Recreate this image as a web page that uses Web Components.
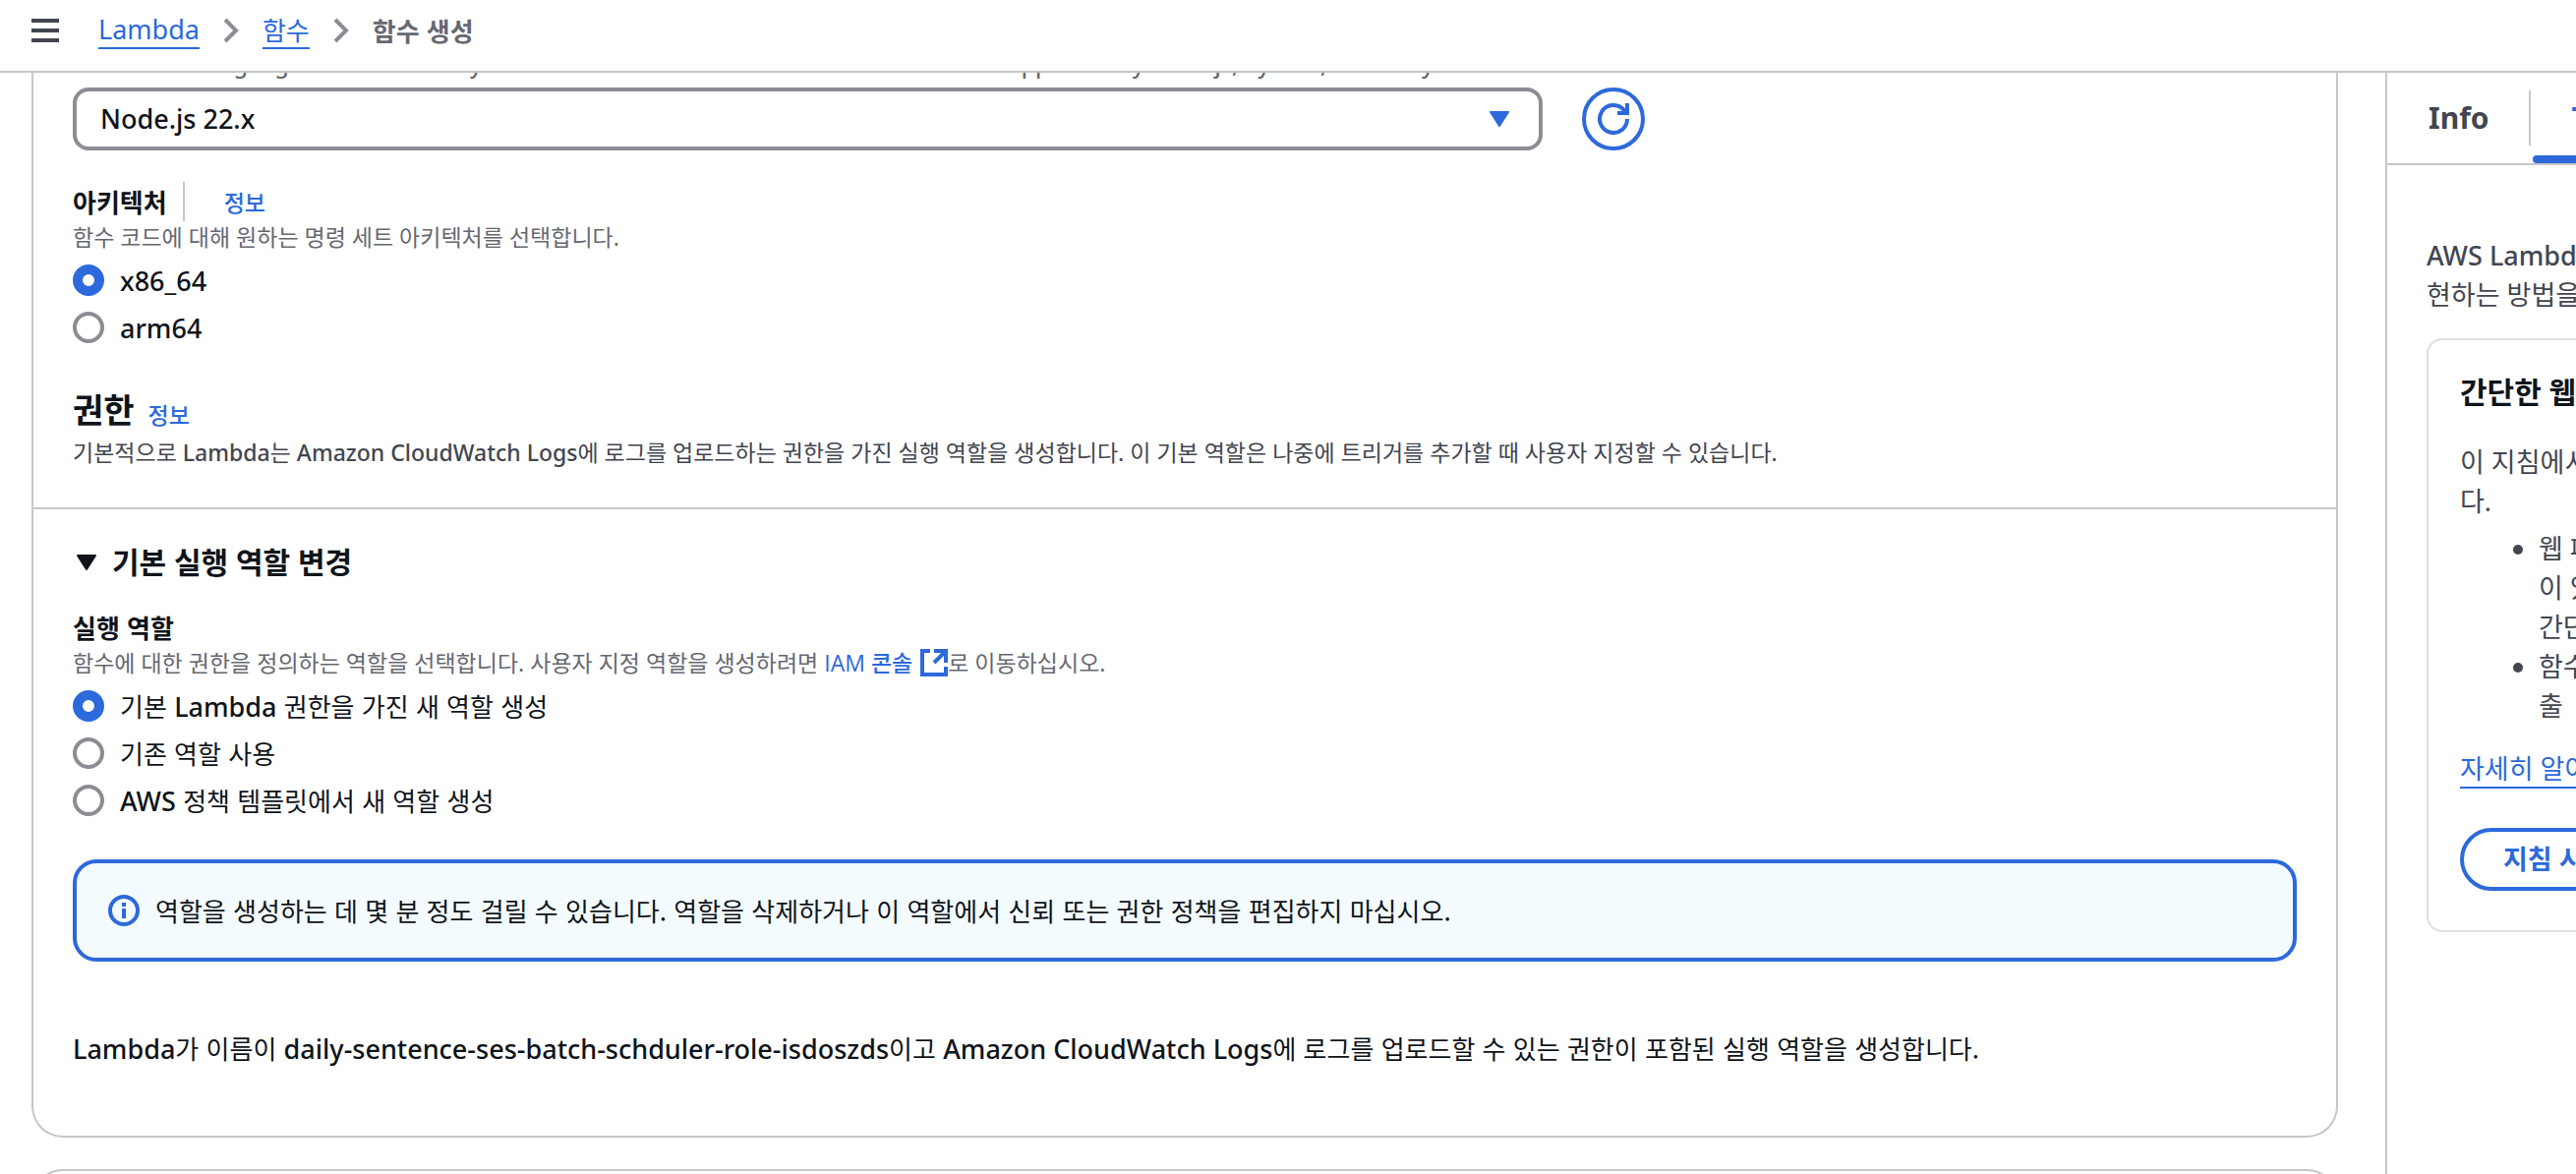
<!DOCTYPE html>
<html lang="ko">
<head>
<meta charset="utf-8">
<title>함수 생성 - Lambda</title>
<style>
  :root {
    --blue: #2c69db;
    --text: #0f141a;
    --body: #424650;
    --muted: #656871;
    --line: #c6c6cd;
    --control: #8c8c94;
    --base: 26px;
    --base-latin: 27px;
    --small: 23px;
    --latin: "Noto Sans", "Noto Sans CJK KR", sans-serif;
  }
  html, body { margin: 0; height: 100%; }
  body {
    overflow: hidden;
    background: #fff;
    color: var(--text);
    font-family: "Noto Sans CJK KR", "Noto Sans", sans-serif;
    font-size: var(--base);
    line-height: 40px;
  }
</style>
</head>
<body>
<console-page></console-page>
<script>
const define = (name, html, setup) => customElements.define(name, class extends HTMLElement {
  connectedCallback() {
    if (this.shadowRoot) return;
    const t = document.createElement('template');
    t.innerHTML = '<style>[lang=en] { font-family: var(--latin); font-size: var(--base-latin); font-weight: 500; }</style>' + html;
    this.attachShadow({ mode: 'open' }).append(t.content.cloneNode(true));
    if (setup) setup(this, this.shadowRoot);
  }
});

define('console-header', `
<style>
  :host { display: flex; align-items: center; box-sizing: border-box; height: 74px; padding: 0 32px 10px; border-bottom: 2px solid var(--line); background: #fff; flex: none; }
  button { all: unset; display: block; width: 28px; height: 24px; cursor: pointer; }
  svg { display: block; }
  nav { margin-left: 40px; }
  ol { display: flex; align-items: center; list-style: none; margin: 0; padding: 0; }
  a { display: block; color: var(--blue); text-decoration: none; line-height: 36px; border-bottom: 2px solid; }
  a[lang=en] { font-weight: 400; }
  li { display: flex; align-items: center; }
  li svg { margin: 0 24px; }
  .here { font-weight: 700; color: var(--muted); line-height: 36px; }
</style>
<button aria-label="메뉴"><svg width="28" height="24" fill="#424650"><path d="M0 0h28v4H0zM0 10h28v4H0zM0 20h28v4H0z"/></svg></button>
<nav>
  <ol>
    <li><a lang="en" href="#lambda">Lambda</a><svg width="16" height="26" fill="none" stroke="#8c8c94" stroke-width="4"><path d="M2 2l11 11L2 24"/></svg></li>
    <li><a href="#functions">함수</a><svg width="16" height="26" fill="none" stroke="#8c8c94" stroke-width="4"><path d="M2 2l11 11L2 24"/></svg></li>
    <li class="here">함수 생성</li>
  </ol>
</nav>`);

define('info-link', `
<style>
  :host { display: inline-block; line-height: 32px; font-family: var(--latin); }
  a { color: var(--blue); font-size: var(--small); font-weight: 500; text-decoration: none; }
</style>
<a href="#info">정보</a>`);

define('runtime-select', `
<style>
  :host { display: flex; gap: 40px; }
  .box { position: relative; flex: 0 1 1495px; }
  select { appearance: none; width: 100%; height: 64px; margin: 0; padding: 0 24px; border: 4px solid var(--control); border-radius: 16px; background: #fff; color: var(--text); font: inherit; font-family: var(--latin); font-size: var(--base-latin); font-weight: 500; display: block; }
  .box svg { position: absolute; right: 34px; top: 24px; pointer-events: none; }
  button { box-sizing: border-box; width: 64px; height: 64px; padding: 0; border: 4px solid var(--blue); border-radius: 50%; background: #fff; display: grid; place-items: center; color: var(--blue); }
</style>
<div class="box">
  <select aria-label="런타임"><option>Node.js 22.x</option></select>
  <svg width="20" height="16" fill="#2c69db" stroke="#2c69db" stroke-width="2" stroke-linejoin="round"><path d="M1 1h18l-9 14z"/></svg>
</div>
<button aria-label="새로 고침"><svg width="32" height="32" fill="none" stroke="currentColor" stroke-width="4"><path d="M30 16A14 14 0 1 1 26 6.200l4 4M30 0v10H20"/></svg></button>`);

define('radio-group', `
<style>
  :host { display: block; }
  fieldset { border: 0; margin: 0; padding: 0; min-width: 0; display: flex; flex-direction: column; gap: 16px; }
  label { display: flex; align-items: center; gap: 16px; height: 32px; line-height: 32px; width: max-content; }
  input { appearance: none; box-sizing: border-box; width: 32px; height: 32px; margin: 0; border: 4px solid var(--control); border-radius: 50%; background: #fff; }
  input:checked { border: 10px solid var(--blue); }
</style>
<fieldset></fieldset>`, (host, root) => {
  const set = root.querySelector('fieldset');
  set.setAttribute('aria-label', host.getAttribute('label'));
  host.getAttribute('options').split('|').forEach((text, i) => {
    const label = document.createElement('label');
    const input = document.createElement('input');
    const caption = document.createElement('span');
    input.type = 'radio';
    input.name = 'choice';
    input.checked = i === 0;
    caption.innerHTML = text.replace(/[A-Za-z]\w*/g, '<span lang="en">$&</span>');
    label.append(input, caption);
    set.append(label);
  });
});

define('info-alert', `
<style>
  :host { display: flex; align-items: center; gap: 16px; box-sizing: border-box; min-height: 104px; padding: 28px 32px; border: 4px solid var(--blue); border-radius: 24px; background: #f3fbfe; }
  svg { flex: none; }
</style>
<svg width="32" height="32" fill="none" stroke="#2c69db"><circle cx="16" cy="16" r="14" stroke-width="4"/><path d="M16 8v4M16 14v10" stroke-width="4"/></svg>
<span><slot></slot></span>`);

define('create-form', `
<style>
  :host { display: flex; flex-direction: column; gap: 32px; flex: 1; min-width: 0; padding: 0 48px 0 32px; overflow: hidden; }
  .card { flex: none; border: 2px solid var(--line); border-top: 0; border-radius: 0 0 32px 32px; }
  .next { height: 64px; border: 2px solid var(--line); border-radius: 32px 32px 0 0; flex: none; }
  section { padding: 0 40px 40px; }
  .hint, .hint [lang=en] { font-size: var(--small); }
  .hint { margin: 0; font-family: var(--latin); line-height: 32px; color: var(--muted); }
  .cut { margin-top: -25px; margin-bottom: 8px; }
  .label { display: flex; align-items: center; height: 40px; margin-top: 32px; font-weight: 700; }
  .label span { padding-right: 16px; border-right: 2px solid var(--line); }
  .label info-link { margin-left: 40px; }
  radio-group { margin-top: 12px; }
  h2 { display: flex; align-items: center; gap: 14px; margin: 43px 0 4px; font-size: 34px; line-height: 48px; }
  h2 info-link { padding-top: 8px; }
  .dark { color: var(--body); }
  .role { border-top: 2px solid var(--line); padding: 36px 40px 68px; }
  h3 { display: flex; align-items: center; gap: 16px; margin: 0; padding-left: 4px; font-family: var(--latin); font-size: 30px; line-height: 36px; }
  h4 { margin: 28px 0 0; font-size: var(--base); line-height: 40px; }
  .hint a { color: var(--blue); text-decoration: none; font-family: "Open Sans", "Noto Sans CJK KR", sans-serif; font-weight: 500; }
  .hint a svg { vertical-align: -5px; margin-left: 8px; }
  info-alert { margin-top: 44px; }
  .result { margin: 68px 0 0; }
</style>
<div class="card">
  <section>
    <p class="hint cut" lang="en">Choose the language to use to write your function. Note that the console code editor supports only Node.js, Python, and Ruby.</p>
    <runtime-select></runtime-select>
    <div class="label"><span>아키텍처</span><info-link></info-link></div>
    <p class="hint">함수 코드에 대해 원하는 명령 세트 아키텍처를 선택합니다.</p>
    <radio-group label="아키텍처" options="x86_64|arm64"></radio-group>
    <h2>권한 <info-link></info-link></h2>
    <p class="hint dark">기본적으로 <span lang="en">Lambda</span>는 <span lang="en">Amazon CloudWatch Logs</span>에 로그를 업로드하는 권한을 가진 실행 역할을 생성합니다. 이 기본 역할은 나중에 트리거를 추가할 때 사용자 지정할 수 있습니다.</p>
  </section>
  <section class="role">
    <h3><svg width="20" height="16" fill="#0f141a" stroke="#0f141a" stroke-width="2" stroke-linejoin="round"><path d="M1 1h18l-9 14z"/></svg>기본 실행 역할 변경</h3>
    <h4>실행 역할</h4>
    <p class="hint">함수에 대한 권한을 정의하는 역할을 선택합니다. 사용자 지정 역할을 생성하려면 <a href="#iam">IAM 콘솔<svg width="28" height="28" fill="none" stroke="#2c69db" stroke-width="4"><path d="M10 2H2v24h24v-8M14 2h12v12M26 2L14 14"/></svg></a>로 이동하십시오.</p>
    <radio-group label="실행 역할" options="기본 Lambda 권한을 가진 새 역할 생성|기존 역할 사용|AWS 정책 템플릿에서 새 역할 생성"></radio-group>
    <info-alert>역할을 생성하는 데 몇 분 정도 걸릴 수 있습니다. 역할을 삭제하거나 이 역할에서 신뢰 또는 권한 정책을 편집하지 마십시오.</info-alert>
    <p class="result"><span lang="en">Lambda</span>가 이름이 <span lang="en">daily-sentence-ses-batch-schduler-role-isdoszds</span>이고 <span lang="en">Amazon CloudWatch Logs</span>에 로그를 업로드할 수 있는 권한이 포함된 실행 역할을 생성합니다.</p>
  </section>
</div>
<div class="next"></div>`);

define('help-panel', `
<style>
  :host { display: block; flex: 0 0 192px; border-left: 2px solid var(--line); overflow: hidden; white-space: nowrap; color: var(--body); font-family: var(--latin); font-size: var(--base-latin); }
  .tabs { display: flex; height: 92px; border-bottom: 2px solid var(--line); font-size: 30px; font-weight: 700; }
  .tabs button { all: unset; box-sizing: border-box; flex: none; height: 92px; line-height: 92px; padding: 0 40px 0 42px; }
  .tabs i { flex: none; width: 2px; height: 56px; margin: 18px 2px 0 0; background: var(--line); }
  .tabs .on { color: var(--blue); position: relative; width: 240px; padding-left: 40px; }
  .tabs .on::after { content: ""; position: absolute; left: 0; right: 0; bottom: 0; height: 8px; border-radius: 4px; background: var(--blue); }
  .body { padding: 72px 0 0 40px; }
  p, ul, h3 { margin: 0; }
  .card { width: 480px; box-sizing: border-box; margin-top: 24px; padding: 32px 32px 40px; border: 2px solid #dedee3; border-radius: 16px; }
  h3 { color: var(--text); font-size: 30px; line-height: 42px; margin-bottom: 30px; }
  ul { padding-left: 80px; margin-top: 8px; }
  a { display: inline-block; margin-top: 26px; line-height: 36px; color: var(--blue); text-decoration: none; border-bottom: 2px solid; }
  .go { display: block; width: 240px; height: 64px; margin-top: 40px; padding: 0 40px; text-align: left; border: 4px solid var(--blue); border-radius: 32px; background: #fff; color: var(--blue); font: inherit; font-weight: 700; line-height: 56px; }
</style>
<div class="tabs"><button>Info</button><i></i><button class="on">T</button></div>
<div class="body">
  <p><span lang="en">AWS Lambda</span><br>현하는 방법을</p>
  <div class="card">
    <h3>간단한 웹</h3>
    <p>이 지침에서<br>다.</p>
    <ul><li>웹 페<br>이 있<br>간단</li><li>함수<br>출</li></ul>
    <a href="#learn">자세히 알아</a>
    <button class="go">지침 시</button>
  </div>
</div>`);

define('console-page', `
<style>
  :host { display: flex; flex-direction: column; height: 100vh; overflow: hidden; }
  main { display: flex; flex: 1; min-height: 0; }
</style>
<console-header></console-header>
<main><create-form></create-form><help-panel></help-panel></main>`);
</script>
</body>
</html>
